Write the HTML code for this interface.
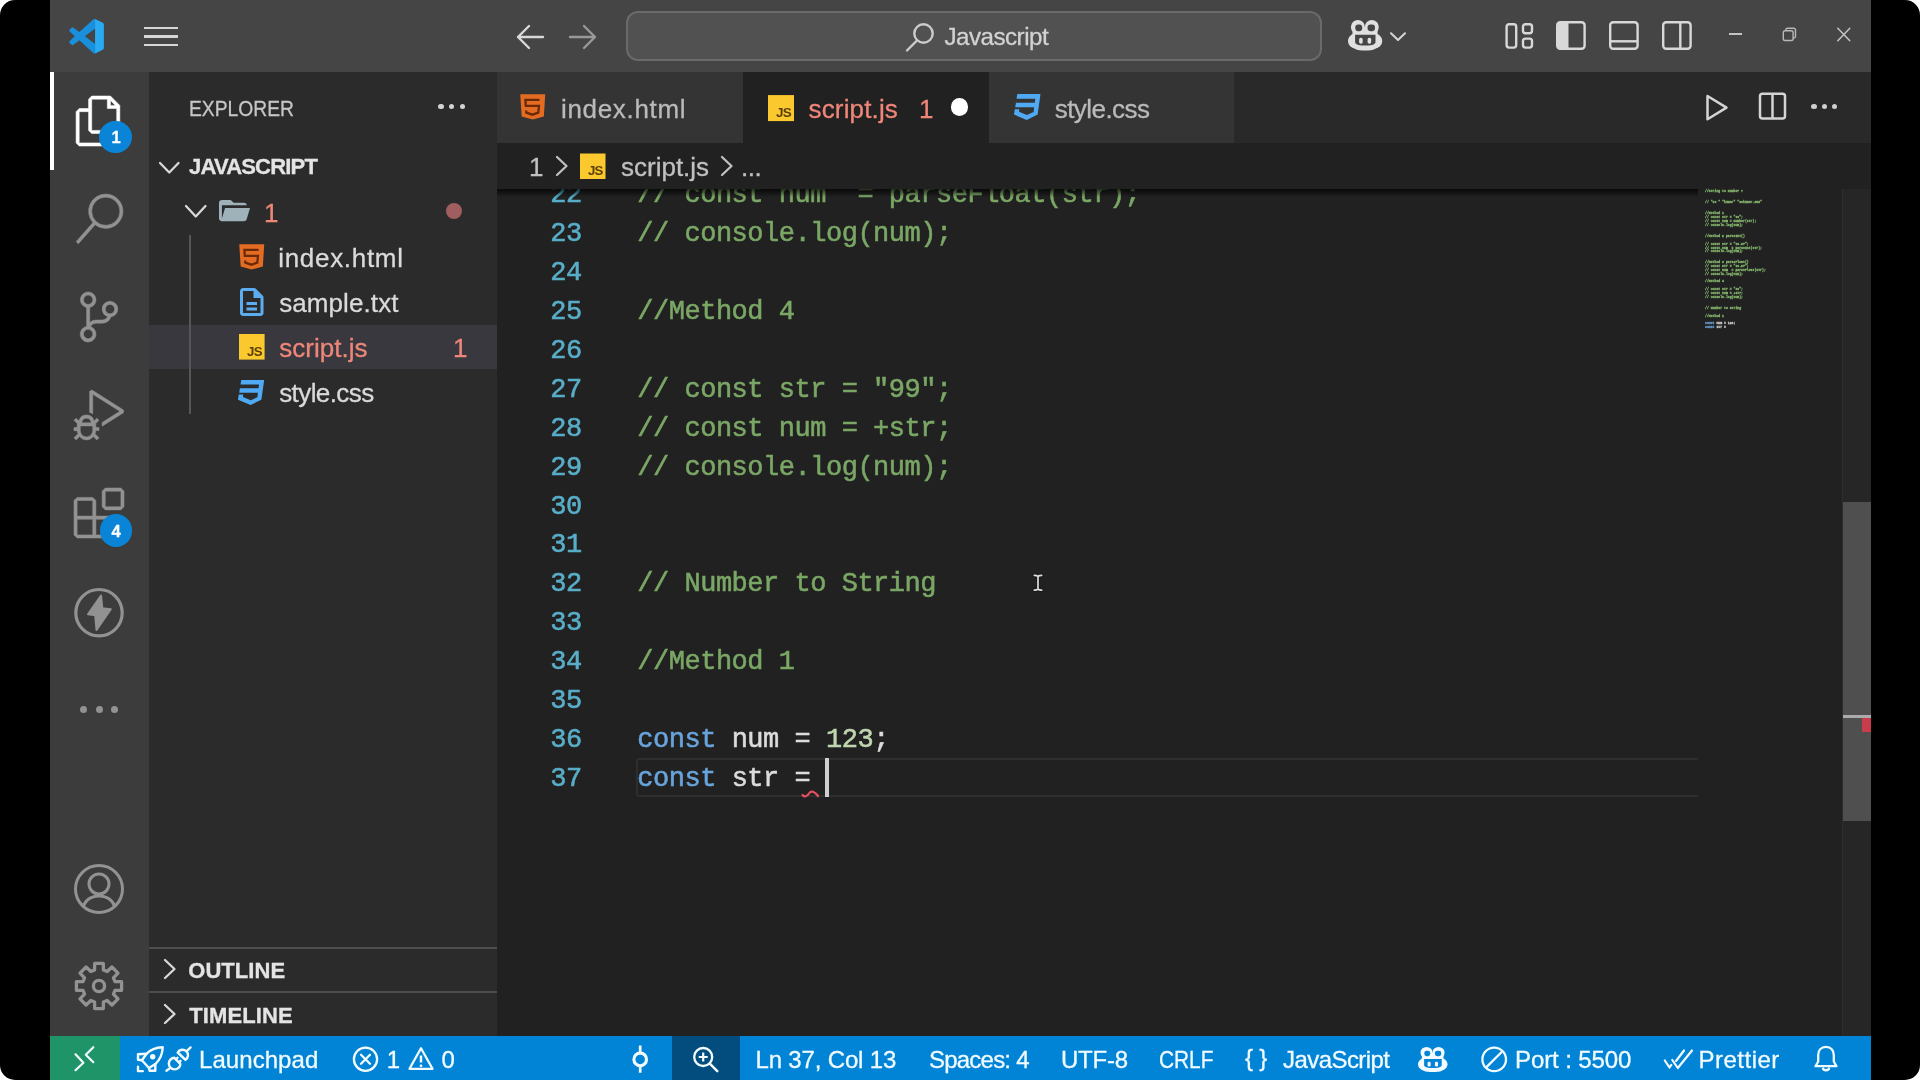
<!DOCTYPE html>
<html lang="en">
<head>
<meta charset="utf-8">
<title>script.js - Javascript - Visual Studio Code</title>
<style>
html,body{margin:0;padding:0}
body{width:1920px;height:1080px;overflow:hidden;background:#fff;position:relative;font-family:"Liberation Sans", sans-serif}
#root{position:absolute;left:0;top:0;width:1920px;height:1080px;will-change:transform}
#frame{position:absolute;left:0;top:0;width:1920px;height:1080px;background:#000;border-radius:15px}
.b{position:absolute}
.i{position:absolute;overflow:visible}
.t{position:absolute;white-space:pre;line-height:1;font-family:"Liberation Sans", sans-serif;-webkit-text-stroke:0.3px}
.m{font-family:"Liberation Mono", monospace;font-size:27.0px;letter-spacing:-0.4826px;-webkit-text-stroke:0.55px}
.ln{text-align:right;color:#58aec8}
.mini{font-family:"Liberation Mono", monospace;font-size:10px;font-weight:700;white-space:pre;color:#86b86e;-webkit-text-stroke:0.8px}
</style>
</head>
<body>
<div id="root">
<div id="frame"></div>
<div class="b" style="left:50px;top:0;width:1821px;height:72px;background:#454545"></div>
<div class="b" style="left:50px;top:72px;width:99px;height:964px;background:#3c3c3c"></div>
<div class="b" style="left:50px;top:72px;width:4px;height:98px;background:#fff"></div>
<div class="b" style="left:149px;top:72px;width:348px;height:964px;background:#2b2b2b"></div>
<div class="b" style="left:497px;top:72px;width:1374px;height:964px;background:#212121"></div>
<div class="b" style="left:497px;top:72px;width:1374px;height:71px;background:#292929"></div>
<div class="b" style="left:497px;top:72px;width:246px;height:71px;background:#343434"></div>
<div class="b" style="left:743px;top:72px;width:246px;height:71px;background:#212121"></div>
<div class="b" style="left:989px;top:72px;width:245px;height:71px;background:#343434"></div>
<div class="b" style="left:50px;top:1036px;width:1821px;height:44px;background:#0284d6"></div>
<div class="b" style="left:50px;top:1036px;width:70px;height:44px;background:#1f9468"></div>
<div class="b" style="left:672px;top:1036px;width:68px;height:44px;background:#034d7e"></div>
<svg class="i" style="left:68.5px;top:19.3px" width="35" height="34.5" viewBox="0 0 24 24" ><path fill="#1890dc" d="M23.15 2.587L18.21.21a1.494 1.494 0 0 0-1.705.29l-9.46 8.63-4.12-3.128a.999.999 0 0 0-1.276.057L.327 7.261A1 1 0 0 0 .326 8.74L3.899 12 .326 15.26a1 1 0 0 0 .001 1.479L1.65 17.94a.999.999 0 0 0 1.276.057l4.12-3.128 9.46 8.63a1.492 1.492 0 0 0 1.704.29l4.942-2.377A1.5 1.5 0 0 0 24 20.06V3.939a1.5 1.5 0 0 0-.85-1.352zm-5.146 14.861L10.826 12l7.178-5.448v10.896z"/><path fill="#2aaaf2" d="M18.004 6.552V.16c.07.01.14.03.206.05l4.94 2.377A1.5 1.5 0 0 1 24 3.939V20.06a1.5 1.5 0 0 1-.85 1.352l-4.942 2.377a1.5 1.5 0 0 1-.204.06z"/></svg>
<div class="b" style="left:144px;top:26.9px;width:34px;height:2.600px;background:#d6d6d6"></div>
<div class="b" style="left:144px;top:35.3px;width:34px;height:2.600px;background:#d6d6d6"></div>
<div class="b" style="left:144px;top:43.7px;width:34px;height:2.600px;background:#d6d6d6"></div>
<svg class="i" style="left:514px;top:21.5px" width="32" height="30" viewBox="0 0 32 30" ><path d="M4 15H29M15 4L4 15L15 26" fill="none" stroke="#d8d8d8" stroke-width="2.4" stroke-linecap="round" stroke-linejoin="round"/></svg>
<svg class="i" style="left:567px;top:21.5px" width="32" height="30" viewBox="0 0 32 30" ><path d="M3 15H28M17 4L28 15L17 26" fill="none" stroke="#999" stroke-width="2.4" stroke-linecap="round" stroke-linejoin="round"/></svg>
<div class="b" style="left:625.500px;top:11px;width:696px;height:50px;box-sizing:border-box;background:#515151;border:2px solid #6a6a6a;border-radius:12px"></div>
<svg class="i" style="left:904px;top:21px" width="32" height="32" viewBox="0 0 32 32" ><circle cx="19.5" cy="12.5" r="9.2" fill="none" stroke="#ccc" stroke-width="2.4"/><path d="M13 19.5L3 29.5" stroke="#ccc" stroke-width="2.4" stroke-linecap="round"/></svg>
<div id="t_cmd" class="t" style="left:944.50px;top:25.31px;font-size:24.2px;color:#d2d2d2;letter-spacing:-0.528px;">Javascript</div>
<svg class="i" style="left:1348px;top:20.3px" width="34.2" height="30.4" viewBox="0 0 34.200 30.200" preserveAspectRatio="none"><g fill="#e0e0e0"><circle cx="9.900" cy="6.900" r="7"/><circle cx="23.800" cy="6.900" r="7"/><rect x="4.500" y="7" width="25" height="10"/><rect x="0" y="11.400" width="34.200" height="18.800" rx="14" ry="9.400"/></g><rect x="7.300" y="4.400" width="6.900" height="6.700" rx="2.800" fill="#454545"/><rect x="19.600" y="4.400" width="7.400" height="6.700" rx="2.800" fill="#454545"/><path fill="#454545" d="M7.100 14.600H27.500V22C27.500 24.500 22 25.400 17.300 25.400S7.100 24.500 7.100 22Z"/><rect x="11.100" y="17.700" width="3.600" height="5.800" rx="1.600" fill="#e0e0e0"/><rect x="19.600" y="17.700" width="3.600" height="5.800" rx="1.600" fill="#e0e0e0"/></svg>
<svg class="i" style="left:1388px;top:30px" width="20" height="14" viewBox="0 0 20 14" ><path d="M3 3.300L10 10L17 3.300" fill="none" stroke="#d4d4d4" stroke-width="2.100" stroke-linecap="round" stroke-linejoin="round"/></svg>
<svg class="i" style="left:1503px;top:21px" width="32" height="30" viewBox="0 0 32 30" ><rect x="3.600" y="3.200" width="9.600" height="23.400" rx="2.500" fill="none" stroke="#d8d8d8" stroke-width="2.400"/><rect x="20" y="3.200" width="9" height="9" rx="2.500" fill="none" stroke="#d8d8d8" stroke-width="2.400"/><rect x="20" y="17.600" width="9" height="9" rx="2.500" fill="none" stroke="#d8d8d8" stroke-width="2.400"/></svg>
<svg class="i" style="left:1555px;top:20px" width="32" height="31" viewBox="0 0 32 31" ><rect x="2.200" y="2.200" width="27.400" height="26.600" rx="3" fill="none" stroke="#d8d8d8" stroke-width="2.400"/><path d="M2.200 5.200a3 3 0 0 1 3-3H13.500V28.800H5.200a3 3 0 0 1-3-3z" fill="#d8d8d8"/></svg>
<svg class="i" style="left:1608px;top:20px" width="32" height="31" viewBox="0 0 32 31" ><rect x="2.200" y="2.200" width="27.400" height="26.600" rx="3" fill="none" stroke="#d8d8d8" stroke-width="2.400"/><path d="M2.200 21.300H29.600" stroke="#d8d8d8" stroke-width="2.400"/></svg>
<svg class="i" style="left:1661px;top:20px" width="32" height="31" viewBox="0 0 32 31" ><rect x="2.200" y="2.200" width="27.400" height="26.600" rx="3" fill="none" stroke="#d8d8d8" stroke-width="2.400"/><path d="M19.300 2.200V28.800" stroke="#d8d8d8" stroke-width="2.400"/></svg>
<div class="b" style="left:1729.400px;top:33px;width:12.600px;height:1.700px;background:#c4c4c4"></div>
<svg class="i" style="left:1781px;top:26px" width="18" height="18" viewBox="0 0 18 18" ><rect x="2.300" y="4.700" width="9.800" height="9.800" rx="1.800" fill="none" stroke="#b8b8b8" stroke-width="1.400"/><path d="M4.800 4.700V4a1.800 1.800 0 0 1 1.800-1.800H12.700a1.800 1.800 0 0 1 1.800 1.800V10.200a1.800 1.800 0 0 1-1.800 1.800H12.100" fill="none" stroke="#b8b8b8" stroke-width="1.400"/></svg>
<svg class="i" style="left:1835px;top:26px" width="18" height="18" viewBox="0 0 18 18" ><path d="M2.800 2.300L14.800 14.800M14.800 2.300L2.800 14.800" stroke="#c4c4c4" stroke-width="1.500" stroke-linecap="round"/></svg>
<svg class="i" style="left:74px;top:95.5px" width="50" height="50" viewBox="0 0 24 24" ><path fill="#fff" stroke="#fff" stroke-width=".260" stroke-linejoin="round" d="M17.5 0h-9L7 1.5V6H2.500L1 7.500v15.070L2.500 24h12.070L16 22.570V18h4.700l1.300-1.430V4.500L17.500 0zm0 2.120l2.380 2.380H17.500V2.120zm-3 20.380h-12v-15H7v9.070L8.500 18h6v4.500zm6-6h-12v-15H16V6h4.500v10.500z"/></svg>
<svg class="i" style="left:74px;top:193.5px" width="50" height="50" viewBox="0 0 24 24" ><path fill="#929292" stroke="#929292" stroke-width=".260" stroke-linejoin="round" d="M15.250 0a8.250 8.250 0 0 0-6.180 13.720L1 22.880l1.120 1 8.050-9.120A8.251 8.251 0 1 0 15.250.010V0zm0 15a6.750 6.750 0 1 1 0-13.500 6.750 6.750 0 0 1 0 13.500z"/></svg>
<svg class="i" style="left:74px;top:291.5px" width="50" height="50" viewBox="0 0 24 24" ><path fill="#929292" stroke="#929292" stroke-width=".260" stroke-linejoin="round" d="M21.007 8.222A3.738 3.738 0 0 0 15.045 5.200a3.737 3.737 0 0 0 1.156 6.583 2.988 2.988 0 0 1-2.668 1.670h-2.990a4.456 4.456 0 0 0-2.989 1.165V7.400a3.737 3.737 0 1 0-1.494 0v9.117a3.776 3.776 0 1 0 1.816.099 2.990 2.990 0 0 1 2.668-1.667h2.990a4.484 4.484 0 0 0 4.223-3.039 3.736 3.736 0 0 0 3.250-3.687zM4.565 3.738a2.242 2.242 0 1 1 4.484 0 2.242 2.242 0 0 1-4.484 0zm4.484 16.441a2.242 2.242 0 1 1-4.484 0 2.242 2.242 0 0 1 4.484 0zm8.221-9.715a2.242 2.242 0 1 1 0-4.485 2.242 2.242 0 0 1 0 4.485z"/></svg>
<svg class="i" style="left:74px;top:389.5px" width="50" height="50" viewBox="0 0 24 24" ><path fill="#929292" stroke="#929292" stroke-width=".260" stroke-linejoin="round" d="M10.940 13.500l-1.320 1.320a3.730 3.730 0 0 0-7.240 0L1.060 13.500 0 14.560l1.720 1.720-.220.220V18H0v1.500h1.500v.080c.077.489.214.966.410 1.420L0 22.940 1.060 24l1.650-1.650A4.308 4.308 0 0 0 6 24a4.310 4.310 0 0 0 3.290-1.650L10.940 24 12 22.940 10.090 21c.198-.464.336-.951.410-1.450v-.100H12V18h-1.500v-1.500l-.220-.220L12 14.560l-1.060-1.060zM6 13.500a2.250 2.250 0 0 1 2.250 2.250h-4.500A2.250 2.250 0 0 1 6 13.500zm3 6a3.330 3.330 0 0 1-3 3 3.330 3.330 0 0 1-3-3v-2.250h6v2.250zm14.760-9.900v1.260L13.500 17.370V15.600l8.500-5.370L9 2v9.460a5.070 5.070 0 0 0-1.500-.720V.630L8.640 0l15.120 9.600z"/></svg>
<svg class="i" style="left:74px;top:487.5px" width="50" height="50" viewBox="0 0 24 24" ><path fill="#929292" stroke="#929292" stroke-width=".260" stroke-linejoin="round" d="M13.500 1.500L15 0h7.500L24 1.500V9l-1.500 1.500H15L13.500 9V1.500zm1.500 0V9h7.500V1.500H15zM0 15V6l1.500-1.500H9L10.500 6v7.500H18l1.500 1.500v7.500L18 24H1.500L0 22.500V15zm9-1.500V6H1.500v7.500H9zM9 15H1.500v7.500H9V15zm1.500 7.500H18V15h-7.500v7.500z"/></svg>
<svg class="i" style="left:72px;top:584px" width="56" height="56" viewBox="0 0 56 56" ><circle cx="27" cy="28.700" r="23.200" fill="none" stroke="#929292" stroke-width="3.200"/><path fill="#929292" stroke="#929292" stroke-width="2" stroke-linejoin="round" d="M29 11.500L30.300 24.200L38.800 25.200L24.500 46L23.200 31.300L16 30.300z"/></svg>
<div class="b" style="left:79.8px;top:706.3px;width:7px;height:7px;border-radius:50%;background:#929292"></div>
<div class="b" style="left:95.5px;top:706.3px;width:7px;height:7px;border-radius:50%;background:#929292"></div>
<div class="b" style="left:111.2px;top:706.3px;width:7px;height:7px;border-radius:50%;background:#929292"></div>
<div class="b" style="left:99.4px;top:120.50000000000001px;width:32.600px;height:32.600px;border-radius:50%;background:#0a84d6"></div><div id="bd1" class="t" style="left:111.40px;top:129.43px;font-size:16.5px;color:#fff;font-weight:700;">1</div>
<div class="b" style="left:99.5px;top:514.4000000000001px;width:32.600px;height:32.600px;border-radius:50%;background:#0a84d6"></div><div id="bd4" class="t" style="left:111.50px;top:523.33px;font-size:16.5px;color:#fff;font-weight:700;">4</div>
<svg class="i" style="left:70px;top:859.5px" width="58" height="58" viewBox="0 0 58 58" ><defs><clipPath id="acl"><circle cx="29" cy="29" r="23.500"/></clipPath></defs><circle cx="29" cy="29" r="23.500" fill="none" stroke="#929292" stroke-width="3"/><circle cx="29" cy="24" r="10" fill="none" stroke="#929292" stroke-width="3"/><path clip-path="url(#acl)" d="M13 49C14 40.500 21 36 29 36S44 40.500 45 49" fill="none" stroke="#929292" stroke-width="3"/></svg>
<svg class="i" style="left:70px;top:957px" width="58" height="58" viewBox="0 0 58 58" ><path d="M24.56 13.00L24.69 6.41L33.31 6.41L33.44 13.00L37.17 14.55L41.93 9.98L48.02 16.07L43.45 20.83L45.00 24.56L51.59 24.69L51.59 33.31L45.00 33.44L43.45 37.17L48.02 41.93L41.93 48.02L37.17 43.45L33.44 45.00L33.31 51.59L24.69 51.59L24.56 45.00L20.83 43.45L16.07 48.02L9.98 41.93L14.55 37.17L13.00 33.44L6.41 33.31L6.41 24.69L13.00 24.56L14.55 20.83L9.98 16.07L16.07 9.98L20.83 14.55Z" fill="none" stroke="#929292" stroke-width="3.300" stroke-linejoin="round"/><circle cx="29" cy="29" r="5.600" fill="none" stroke="#929292" stroke-width="3.300"/></svg>
<div id="sb_exp" class="t" style="left:188.50px;top:97.88px;font-size:22px;color:#c6c6c6;transform:scaleX(0.8761);transform-origin:0 0;">EXPLORER</div>
<div class="b" style="left:438.3px;top:104.0px;width:5.400px;height:5.400px;border-radius:50%;background:#d4d4d4"></div>
<div class="b" style="left:449.0px;top:104.0px;width:5.400px;height:5.400px;border-radius:50%;background:#d4d4d4"></div>
<div class="b" style="left:459.7px;top:104.0px;width:5.400px;height:5.400px;border-radius:50%;background:#d4d4d4"></div>
<svg class="i" style="left:156.5px;top:159.5px" width="24.5" height="15.5" viewBox="0 0 24.5 15.5" ><path d="M3 3L12.25 12.5L21.5 3" fill="none" stroke="#d8d8d8" stroke-width="2.3" stroke-linecap="round" stroke-linejoin="round"/></svg>
<div id="sb_js" class="t" style="left:189.00px;top:155.58px;font-size:22px;color:#e4e4e4;font-weight:700;letter-spacing:-0.800px;">JAVASCRIPT</div>
<svg class="i" style="left:183px;top:202.5px" width="25.5" height="16.5" viewBox="0 0 25.5 16.5" ><path d="M3 3L12.75 13.5L22.5 3" fill="none" stroke="#d8d8d8" stroke-width="2.3" stroke-linecap="round" stroke-linejoin="round"/></svg>
<svg class="i" style="left:219.4px;top:200.3px" width="31" height="21.2" viewBox="2 4 21.2 16" preserveAspectRatio="none"><path fill="#9fb1b9" d="M19 20H4c-1.110 0-2-.9-2-2V6c0-1.110.890-2 2-2h6l2 2h7a2 2 0 0 1 2 2H4v10l2.140-8h17.070l-2.280 8.500c-.230.870-1.010 1.500-1.930 1.500z"/></svg>
<div id="sb_f1" class="t" style="left:264.00px;top:199.59px;font-size:26px;color:#ef8679;">1</div>
<div class="b" style="left:445.800px;top:202.500px;width:16px;height:16px;border-radius:50%;background:#a05e5e"></div>
<div class="b" style="left:149px;top:324.500px;width:348px;height:44.500px;background:#38383e"></div>
<div class="b" style="left:189.200px;top:234.500px;width:2.200px;height:179px;background:#565656"></div>
<svg class="i" style="left:238.7px;top:243.7px" width="25.5" height="26" viewBox="0 0 26 26" preserveAspectRatio="none"><path fill="#e36c22" d="M0.300 0.200H25.700L24.300 22.400L13 25.600L1.700 22.400z"/><path fill="none" stroke="#6a2a0a" stroke-width="2.300" d="M19.900 5.800H5.500L5.900 11.800H19.400L18.600 18.700L12.700 20.700L6.400 18.700L6.200 16.500"/></svg>
<div id="sb_r1" class="t" style="left:278.20px;top:244.79px;font-size:26px;color:#dadada;letter-spacing:0.700px;">index.html</div>
<svg class="i" style="left:240px;top:287.7px" width="23.5" height="28" viewBox="0 0 23.500 28" ><path d="M3.500 1.500H14.500L22 9V25a1.500 1.500 0 0 1-1.500 1.500H3a1.500 1.500 0 0 1-1.500-1.500V3A1.500 1.500 0 0 1 3 1.500z" fill="none" stroke="#5cadf0" stroke-width="3" stroke-linejoin="round"/><path d="M13.500 1.500V10H22z" fill="#5cadf0"/><path d="M6.500 15.500H17M6.500 21H17" stroke="#5cadf0" stroke-width="3"/></svg>
<div id="sb_r2" class="t" style="left:279.20px;top:289.79px;font-size:26px;color:#dadada;letter-spacing:0.089px;">sample.txt</div>
<svg class="i" style="left:238.6px;top:334px" width="25.6" height="25.6" viewBox="0 0 26 26" ><rect x="0" y="0" width="26" height="26" fill="#fbc92e"/><text x="23.200" y="22.200" text-anchor="end" font-family="Liberation Sans, sans-serif" font-weight="700" font-size="13.500" letter-spacing="-0.7" fill="#5a3f05">JS</text></svg>
<div id="sb_r3" class="t" style="left:279.20px;top:334.79px;font-size:26px;color:#ef8679;letter-spacing:0.038px;">script.js</div>
<div id="sb_r3b" class="t" style="left:453.00px;top:334.79px;font-size:26px;color:#ef8679;">1</div>
<svg class="i" style="left:237.4px;top:379.6px" width="27.2" height="25" viewBox="0 0 27 25" preserveAspectRatio="none"><path fill="#50aaf3" d="M4.200 0H27L24.200 19.800L13.500 25L1 19.800L1.700 14.600H6.200L5.900 17L13.600 20.200L20.200 17.300L20.800 12.800H2.200L2.900 8.300H21.400L21.900 4.500H3.500z"/></svg>
<div id="sb_r4" class="t" style="left:279.20px;top:379.79px;font-size:26px;color:#dadada;letter-spacing:-0.587px;">style.css</div>
<div class="b" style="left:149px;top:946.500px;width:348px;height:2px;background:#4d4d4d"></div>
<div class="b" style="left:149px;top:990.800px;width:348px;height:2px;background:#4d4d4d"></div>
<svg class="i" style="left:162px;top:957px" width="15.5" height="24" viewBox="0 0 15.5 24" ><path d="M3 3L12.5 12.0L3 21" fill="none" stroke="#d8d8d8" stroke-width="2.3" stroke-linecap="round" stroke-linejoin="round"/></svg>
<div id="sb_out" class="t" style="left:188.25px;top:959.78px;font-size:22px;color:#e4e4e4;font-weight:700;letter-spacing:0.042px;">OUTLINE</div>
<svg class="i" style="left:162px;top:1002px" width="15.5" height="24" viewBox="0 0 15.5 24" ><path d="M3 3L12.5 12.0L3 21" fill="none" stroke="#d8d8d8" stroke-width="2.3" stroke-linecap="round" stroke-linejoin="round"/></svg>
<div id="sb_tl" class="t" style="left:189.25px;top:1004.58px;font-size:22px;color:#e4e4e4;font-weight:700;letter-spacing:0.107px;">TIMELINE</div>
<svg class="i" style="left:519.6px;top:94.3px" width="25.5" height="26" viewBox="0 0 26 26" preserveAspectRatio="none"><path fill="#e36c22" d="M0.300 0.200H25.700L24.300 22.400L13 25.600L1.700 22.400z"/><path fill="none" stroke="#6a2a0a" stroke-width="2.300" d="M19.900 5.800H5.500L5.900 11.800H19.400L18.600 18.700L12.700 20.700L6.400 18.700L6.200 16.500"/></svg>
<div id="tb1" class="t" style="left:561.00px;top:95.99px;font-size:26px;color:#bababa;letter-spacing:0.667px;">index.html</div>
<svg class="i" style="left:768px;top:94.5px" width="26" height="26.2" viewBox="0 0 26 26" ><rect x="0" y="0" width="26" height="26" fill="#fbc92e"/><text x="23.200" y="22.200" text-anchor="end" font-family="Liberation Sans, sans-serif" font-weight="700" font-size="13.500" letter-spacing="-0.7" fill="#5a3f05">JS</text></svg>
<div id="tb2" class="t" style="left:808.50px;top:95.99px;font-size:26px;color:#ef8679;letter-spacing:0.156px;">script.js</div>
<div id="tb2b" class="t" style="left:919.00px;top:95.99px;font-size:26px;color:#ef8679;">1</div>
<div class="b" style="left:950.750px;top:98.250px;width:17.500px;height:17.500px;border-radius:50%;background:#fff"></div>
<svg class="i" style="left:1012.9px;top:94.3px" width="27.5" height="26" viewBox="0 0 27 25" preserveAspectRatio="none"><path fill="#50aaf3" d="M4.200 0H27L24.200 19.800L13.500 25L1 19.800L1.700 14.600H6.200L5.900 17L13.600 20.200L20.200 17.300L20.800 12.800H2.200L2.900 8.300H21.400L21.900 4.500H3.500z"/></svg>
<div id="tb3" class="t" style="left:1054.75px;top:95.99px;font-size:26px;color:#bababa;letter-spacing:-0.562px;">style.css</div>
<svg class="i" style="left:1702px;top:90px" width="32" height="36" viewBox="0 0 32 36" ><path d="M5.500 6L24.500 17.600L5.500 29.300z" fill="none" stroke="#d4d4d4" stroke-width="2.500" stroke-linejoin="round"/></svg>
<svg class="i" style="left:1756px;top:90px" width="34" height="34" viewBox="0 0 34 34" ><rect x="4" y="3.800" width="25" height="24.600" rx="2.500" fill="none" stroke="#d4d4d4" stroke-width="2.500"/><path d="M16.500 3.800V28.400" stroke="#d4d4d4" stroke-width="2.500"/></svg>
<div class="b" style="left:1811.3px;top:104.0px;width:5.400px;height:5.400px;border-radius:50%;background:#cecece"></div>
<div class="b" style="left:1821.5px;top:104.0px;width:5.400px;height:5.400px;border-radius:50%;background:#cecece"></div>
<div class="b" style="left:1831.7px;top:104.0px;width:5.400px;height:5.400px;border-radius:50%;background:#cecece"></div>
<div class="b" style="left:635.500px;top:758px;width:1062px;height:38.500px;box-sizing:border-box;border:2px solid #2e2e2e;border-right:none;border-radius:3px 0 0 3px"></div>
<div class="t m ln" style="left:497px;width:84.800px;top:182.41px">22</div>
<div class="t m cd" style="left:637.300px;top:182.41px"><span style="color:#7aa765">// const num  = parseFloat(str);</span></div>
<div class="t m ln" style="left:497px;width:84.800px;top:221.30px">23</div>
<div class="t m cd" style="left:637.300px;top:221.30px"><span style="color:#7aa765">// console.log(num);</span></div>
<div class="t m ln" style="left:497px;width:84.800px;top:260.19px">24</div>
<div class="t m ln" style="left:497px;width:84.800px;top:299.08px">25</div>
<div class="t m cd" style="left:637.300px;top:299.08px"><span style="color:#7aa765">//Method 4</span></div>
<div class="t m ln" style="left:497px;width:84.800px;top:337.97px">26</div>
<div class="t m ln" style="left:497px;width:84.800px;top:376.86px">27</div>
<div class="t m cd" style="left:637.300px;top:376.86px"><span style="color:#7aa765">// const str = "99";</span></div>
<div class="t m ln" style="left:497px;width:84.800px;top:415.75px">28</div>
<div class="t m cd" style="left:637.300px;top:415.75px"><span style="color:#7aa765">// const num = +str;</span></div>
<div class="t m ln" style="left:497px;width:84.800px;top:454.64px">29</div>
<div class="t m cd" style="left:637.300px;top:454.64px"><span style="color:#7aa765">// console.log(num);</span></div>
<div class="t m ln" style="left:497px;width:84.800px;top:493.53px">30</div>
<div class="t m ln" style="left:497px;width:84.800px;top:532.42px">31</div>
<div class="t m ln" style="left:497px;width:84.800px;top:571.31px">32</div>
<div class="t m cd" style="left:637.300px;top:571.31px"><span style="color:#7aa765">// Number to String</span></div>
<div class="t m ln" style="left:497px;width:84.800px;top:610.20px">33</div>
<div class="t m ln" style="left:497px;width:84.800px;top:649.09px">34</div>
<div class="t m cd" style="left:637.300px;top:649.09px"><span style="color:#7aa765">//Method 1</span></div>
<div class="t m ln" style="left:497px;width:84.800px;top:687.98px">35</div>
<div class="t m ln" style="left:497px;width:84.800px;top:726.87px">36</div>
<div class="t m cd" style="left:637.300px;top:726.87px"><span style="color:#68a4dc">const</span><span style="color:#dcdcdc"> num = </span><span style="color:#bfd6b0">123</span><span style="color:#dcdcdc">;</span></div>
<div class="t m ln" style="left:497px;width:84.800px;top:765.76px">37</div>
<div class="t m cd" style="left:637.300px;top:765.76px"><span style="color:#68a4dc">const</span><span style="color:#dcdcdc"> str = </span></div>
<svg class="i" style="left:800px;top:788px" width="22" height="12" viewBox="0 0 22 12" ><path d="M2.500 7C4.500 9.500 7 8.500 9 5.500C11 2.500 14.500 3 18 8" fill="none" stroke="#e8505f" stroke-width="2.200" stroke-linecap="round"/></svg>
<div class="b" style="left:824.600px;top:757.600px;width:4.600px;height:39px;background:#cfcfcf"></div>
<svg class="i" style="left:1031px;top:570.5px" width="14" height="24" viewBox="0 0 14 24" ><path d="M3.300 4.300C5 4.300 6.300 4.600 7 5.400C7.700 4.600 9 4.300 10.700 4.300M3.300 19.200C5 19.200 6.300 18.900 7 18.100C7.700 18.900 9 19.200 10.700 19.200M7 5.400V18.100" fill="none" stroke="#181818" stroke-width="3.600" stroke-linecap="round"/><path d="M3.300 4.300C5 4.300 6.300 4.600 7 5.400C7.700 4.600 9 4.300 10.700 4.300M3.300 19.200C5 19.200 6.300 18.900 7 18.100C7.700 18.900 9 19.200 10.700 19.200M7 5.400V18.100" fill="none" stroke="#dedede" stroke-width="1.700" stroke-linecap="round"/></svg>
<div class="b" style="left:497px;top:189px;width:1201px;height:8px;background:linear-gradient(rgba(0,0,0,.72),rgba(0,0,0,.42) 45%,rgba(0,0,0,0))"></div>
<div class="b" style="left:497px;top:143px;width:1374px;height:46px;background:#212121"></div>
<div id="bc1" class="t" style="left:529.00px;top:153.99px;font-size:26px;color:#c0c0c0;">1</div>
<svg class="i" style="left:553.5px;top:154px" width="15.5" height="24" viewBox="0 0 15.5 24" ><path d="M3 3L12.5 12.0L3 21" fill="none" stroke="#c0c0c0" stroke-width="2.3" stroke-linecap="round" stroke-linejoin="round"/></svg>
<svg class="i" style="left:580px;top:153px" width="25.5" height="26.5" viewBox="0 0 26 26" ><rect x="0" y="0" width="26" height="26" fill="#fbc92e"/><text x="23.200" y="22.200" text-anchor="end" font-family="Liberation Sans, sans-serif" font-weight="700" font-size="13.500" letter-spacing="-0.7" fill="#5a3f05">JS</text></svg>
<div id="bc2" class="t" style="left:621.00px;top:153.99px;font-size:26px;color:#c0c0c0;">script.js</div>
<svg class="i" style="left:719px;top:154px" width="15.5" height="24" viewBox="0 0 15.5 24" ><path d="M3 3L12.5 12.0L3 21" fill="none" stroke="#c0c0c0" stroke-width="2.3" stroke-linecap="round" stroke-linejoin="round"/></svg>
<div id="bc3" class="t" style="left:741.00px;top:153.99px;font-size:26px;color:#c0c0c0;letter-spacing:-0.500px;">...</div>
<div class="b mini" style="left:1705px;top:188.600px;transform:scale(0.31662);transform-origin:0 0;line-height:11.970px">//String to Number ?


// "99 " "kumar" "99kumar.###"


//Method 1
// const str = "99";
// const num = Number(str);
// console.log(num);


//Method 2 parseInt()

// const str = "99.87";
// const num  = parseInt(str);
// console.log(num);


//Method 3 parseFloat()
// const str = "99.87";
// const num  = parseFloat(str);
// console.log(num);

//Method 4

// const str = "99";
// const num = +str;
// console.log(num);


// Number to String

//Method 1

<span style="color:#6aa0d8">const</span><span style="color:#d0d0d0"> num = 123;</span>
<span style="color:#6aa0d8">const</span><span style="color:#d0d0d0"> str =</span></div>
<div class="b" style="left:1842px;top:189px;width:29px;height:847px;background:#262626;border-left:1.500px solid #2e2e2e;box-sizing:border-box"></div>
<div class="b" style="left:1842.500px;top:502px;width:28.500px;height:319px;background:#4f4f4f"></div>
<div class="b" style="left:1842.500px;top:714.500px;width:28.500px;height:3px;background:#ababab"></div>
<div class="b" style="left:1862px;top:718px;width:9px;height:14px;background:#c83c4c"></div>
<svg class="i" style="left:70px;top:1042px" width="30" height="34" viewBox="0 0 30 34" ><path d="M5.500 12.300L13.400 20.700L5.500 28.200M23.300 5.200L15.800 12.700L23.300 20.200" fill="none" stroke="#f2fbff" stroke-width="2.200" stroke-linecap="round" stroke-linejoin="round"/></svg>
<svg class="i" style="left:132px;top:1040px" width="64" height="36" viewBox="0 0 64 36" ><g fill="none" stroke="#f2fbff" stroke-width="2.400" stroke-linejoin="round" stroke-linecap="round"><path d="M30.700 7.200C24 7.400 18.200 9.800 14.600 13.800L9.900 20.300L17 28L23.300 24.100C27.700 20 30.500 14 30.700 7.200Z"/><path d="M14.600 13.800L6 14.200L6 19.800L9.900 20.300"/><path d="M23.300 24.100L23.300 30.800L17.600 30.800L17 28"/><path d="M6 26.700V31.100H10.800"/><circle cx="20.700" cy="16.700" r="1.500" fill="#f2fbff"/><path d="M45.700 12.500L53.500 19.800A5.500 5.500 0 1 0 45.700 12.500Z"/><path d="M55.200 10.600L58.600 7.400"/><path d="M42.400 17.800L48.400 24A5.800 5.800 0 1 1 42.400 17.800Z"/><path d="M43.900 19.350L45.500 17.750M46.900 22.450L48.500 20.850M37.200 28.800L34.400 30.700"/></g></svg>
<div id="s_lp" class="t" style="left:199.00px;top:1048.18px;font-size:24px;color:#f2fbff;letter-spacing:0.062px;">Launchpad</div>
<svg class="i" style="left:351px;top:1045px" width="30" height="30" viewBox="0 0 30 30" ><circle cx="14.500" cy="14.200" r="11.600" fill="none" stroke="#f2fbff" stroke-width="2.300"/><path d="M10 9.700L19 18.700M19 9.700L10 18.700" stroke="#f2fbff" stroke-width="2.300" stroke-linecap="round"/></svg>
<div id="s_e1" class="t" style="left:386.70px;top:1048.18px;font-size:24px;color:#f2fbff;">1</div>
<svg class="i" style="left:406px;top:1045px" width="30" height="28" viewBox="0 0 30 28" ><path d="M15 3.200L26.500 23.800H3.500z" fill="none" stroke="#f2fbff" stroke-width="2.300" stroke-linejoin="round"/><path d="M15 10.500V17.500" stroke="#f2fbff" stroke-width="2.500"/><circle cx="15" cy="20.800" r="1.400" fill="#f2fbff"/></svg>
<div id="s_w0" class="t" style="left:441.60px;top:1048.18px;font-size:24px;color:#f2fbff;">0</div>
<svg class="i" style="left:628px;top:1042px" width="24" height="34" viewBox="0 0 24 34" ><circle cx="12.200" cy="17.400" r="6.300" fill="none" stroke="#f2fbff" stroke-width="3.100"/><path d="M12.200 3.400V10.500M12.200 24V30.800" stroke="#f2fbff" stroke-width="2.700"/></svg>
<svg class="i" style="left:691px;top:1044.5px" width="30" height="30" viewBox="0 0 30 30" ><circle cx="12.200" cy="12" r="9" fill="none" stroke="#f2fbff" stroke-width="2.300"/><path d="M18.800 18.600L26.300 26.200" stroke="#f2fbff" stroke-width="2.500" stroke-linecap="round"/><path d="M7.700 12H16.700M12.200 7.500V16.500" stroke="#f2fbff" stroke-width="2.200"/></svg>
<div id="s_ln" class="t" style="left:755.50px;top:1048.18px;font-size:24px;color:#f2fbff;letter-spacing:-0.167px;">Ln 37, Col 13</div>
<div id="s_sp" class="t" style="left:929.00px;top:1048.18px;font-size:24px;color:#f2fbff;letter-spacing:-0.781px;">Spaces: 4</div>
<div id="s_utf" class="t" style="left:1061.00px;top:1048.18px;font-size:24px;color:#f2fbff;letter-spacing:-0.250px;">UTF-8</div>
<div id="s_crlf" class="t" style="left:1159.00px;top:1048.18px;font-size:24px;color:#f2fbff;transform:scaleX(0.8689);transform-origin:0 0;">CRLF</div>
<div id="s_br" class="t" style="left:1245.00px;top:1045.58px;font-size:24px;color:#f2fbff;letter-spacing:-0.250px;">{ }</div>
<div id="s_js" class="t" style="left:1283.00px;top:1048.18px;font-size:24px;color:#f2fbff;letter-spacing:-0.556px;">JavaScript</div>
<svg class="i" style="left:1418.3px;top:1047px" width="29.5" height="25" viewBox="0 0 34.200 30.200" preserveAspectRatio="none"><g fill="#f2fbff"><circle cx="9.900" cy="6.900" r="7"/><circle cx="23.800" cy="6.900" r="7"/><rect x="4.500" y="7" width="25" height="10"/><rect x="0" y="11.400" width="34.200" height="18.800" rx="14" ry="9.400"/></g><rect x="7.300" y="4.400" width="6.900" height="6.700" rx="2.800" fill="#0284d6"/><rect x="19.600" y="4.400" width="7.400" height="6.700" rx="2.800" fill="#0284d6"/><path fill="#0284d6" d="M7.100 14.600H27.500V22C27.500 24.500 22 25.400 17.300 25.400S7.100 24.500 7.100 22Z"/><rect x="11.100" y="17.700" width="3.600" height="5.800" rx="1.600" fill="#f2fbff"/><rect x="19.600" y="17.700" width="3.600" height="5.800" rx="1.600" fill="#f2fbff"/></svg>
<svg class="i" style="left:1479px;top:1045px" width="30" height="30" viewBox="0 0 30 30" ><circle cx="15.200" cy="14.400" r="11.800" fill="none" stroke="#f2fbff" stroke-width="2.300"/><path d="M7 22.600L23.400 6.200" stroke="#f2fbff" stroke-width="2.300"/></svg>
<div id="s_port" class="t" style="left:1515.00px;top:1048.18px;font-size:24px;color:#f2fbff;letter-spacing:-0.100px;">Port : 5500</div>
<svg class="i" style="left:1662px;top:1046px" width="34" height="28" viewBox="0 0 34 28" ><path d="M2.800 14.500L7.500 21.500L9.300 18.800M10.300 14L15.800 22L30 4.500M22 4.500L14 15" fill="none" stroke="#f2fbff" stroke-width="2.200" stroke-linecap="round" stroke-linejoin="round"/></svg>
<div id="s_pr" class="t" style="left:1698.50px;top:1048.18px;font-size:24px;color:#f2fbff;letter-spacing:0.500px;">Prettier</div>
<svg class="i" style="left:1812px;top:1044px" width="28" height="30" viewBox="0 0 28 30" ><path d="M14 2.800C9 2.800 6.200 6.500 6.200 11V17.500L3.500 22.200H24.500L21.800 17.500V11C21.800 6.500 19 2.800 14 2.800Z" fill="none" stroke="#f2fbff" stroke-width="2.300" stroke-linejoin="round"/><path d="M11 24.500C11.500 26.800 16.500 26.800 17 24.500" fill="none" stroke="#f2fbff" stroke-width="2.300" stroke-linecap="round"/></svg>
</div>
</body>
</html>
